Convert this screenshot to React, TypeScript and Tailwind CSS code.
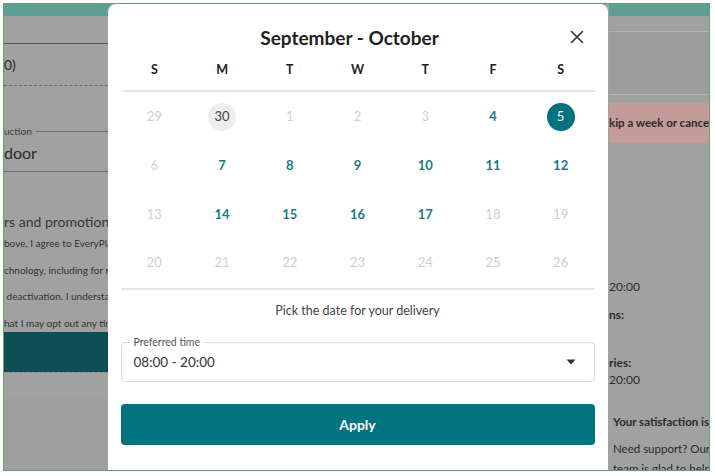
import React from "react";

const teal = "text-[#1d7884]";

type Day = { n: number; on?: boolean; today?: boolean; picked?: boolean };

const weeks: Day[][] = [
  [{ n: 29 }, { n: 30, today: true }, { n: 1 }, { n: 2 }, { n: 3 }, { n: 4, on: true }, { n: 5, picked: true }],
  [{ n: 6 }, { n: 7, on: true }, { n: 8, on: true }, { n: 9, on: true }, { n: 10, on: true }, { n: 11, on: true }, { n: 12, on: true }],
  [{ n: 13 }, { n: 14, on: true }, { n: 15, on: true }, { n: 16, on: true }, { n: 17, on: true }, { n: 18 }, { n: 19 }],
  [{ n: 20 }, { n: 21 }, { n: 22 }, { n: 23 }, { n: 24 }, { n: 25 }, { n: 26 }],
];

const DayCell = ({ d }: { d: Day }) => {
  if (d.picked) {
    return (
      <div className="flex h-7 w-7 items-center justify-center rounded-full bg-[#00717d] text-[13px] text-white">
        {d.n}
      </div>
    );
  }
  if (d.today) {
    return (
      <div className="flex h-7 w-7 items-center justify-center rounded-full bg-[#ededed] text-[13px] text-[#444]">
        {d.n}
      </div>
    );
  }
  return (
    <span className={`text-[13px] ${d.on ? `font-bold ${teal}` : "text-[#cfcfcf]"}`}>{d.n}</span>
  );
};

// page that sits dimmed behind the dialog
const Backdrop = () => (
  <div className="flex h-full w-full bg-[#a1a1a1] font-['Lato',sans-serif] text-[#2b2b2b]">
    <div className="w-[300px] shrink-0 whitespace-nowrap">
      <div className="h-3 bg-[#5e9e94]" />
      <div className="mt-[27px] border-t border-[#5c5c5c]" />
      <div className="flex h-[41px] items-center text-[14px]">0)</div>
      <div className="border-t border-dashed border-[#6a6a6a]" />
      <div className="mt-[38px] flex items-center gap-1">
        <span className="text-[10px] text-[#3d3d3d]">uction</span>
        <div className="flex-1 border-t border-[#5a7a78]" />
      </div>
      <div className="h-[28px] text-[16px] leading-[28px]">door</div>
      <div className="mt-[4px] border-t border-[#5a7a78]" />
      <div className="mt-[40px] text-[14px] leading-[20px] text-[#363636]">rs and promotions</div>
      <div className="mt-[-2px] flex flex-col text-[10px] leading-[26.5px] text-[#333]">
        <span>bove, I agree to EveryPlate's offers</span>
        <span>chnology, including for reminders</span>
        <span>&nbsp;deactivation. I understand</span>
        <span>hat I may opt out any time</span>
      </div>
      <div className="mt-[-4px] h-[40px] bg-[#0d4f55]" />
      <div className="border-t border-dashed border-[#8a8a8a]" />
      <div className="mt-[25px] h-[80px] bg-[#9f9f9f]" />
    </div>
    <div className="flex-1" />
    <div className="w-[100px] shrink-0 overflow-hidden whitespace-nowrap">
      <div className="h-3 bg-[#5e9e94]" />
      <div className="h-[15px]" />
      <div className="h-[64px] border-y border-[#b1b1b1] bg-[#9d9d9d]" />
      <div className="mt-[8px] flex h-[40px] items-center bg-[#c39c99] text-[11.5px] font-bold">kip a week or cancel</div>
      <div className="mt-[135px] text-[12px] leading-[18px]">20:00</div>
      <div className="mt-[10px] text-[12px] font-bold leading-[18px]">ns:</div>
      <div className="mt-[30px] text-[12px] font-bold leading-[18px]">ries:</div>
      <div className="text-[12px] leading-[16px]">20:00</div>
      <div className="mt-[25px] pl-[4px] text-[11.5px] font-bold leading-[18px]">Your satisfaction is</div>
      <div className="mt-[8px] pl-[4px] text-[11.5px] leading-[20px]">Need support? Our</div>
      <div className="pl-[4px] text-[11.5px] leading-[20px]">team is glad to help</div>
    </div>
  </div>
);

const App: React.FC = () => {
  return (
    <div className="relative h-[476px] w-[715px] overflow-hidden bg-white">
      <div className="absolute left-[3px] top-[3px] h-[468px] w-[707px] overflow-hidden border-[1.5px] border-[#5fa26c]">
        <Backdrop />

        {/* delivery date dialog */}
        <div className="absolute left-[103.5px] top-0 flex h-[480px] w-[500px] flex-col rounded-t-lg bg-white px-[13px] font-['Lato',sans-serif]">
          <div className="relative mt-[22px] flex h-6 items-center justify-center pr-[16px]">
            <h2 className="text-[19px] font-bold text-[#222]">September - October</h2>
            <button className="absolute right-[10px] top-[3px] text-[#333]">
              <svg width="16" height="16" viewBox="0 0 16 16" fill="none" stroke="currentColor" strokeWidth="1.6" strokeLinecap="round">
                <path d="M2.5 2.5l11 11M13.5 2.5l-11 11" />
              </svg>
            </button>
          </div>

          <div className="mt-[11px] grid grid-cols-7 text-center text-[12.5px] font-bold text-[#222]">
            {["S", "M", "T", "W", "T", "F", "S"].map((d, i) => (
              <span key={i}>{d}</span>
            ))}
          </div>

          <div className="mt-[10px] border-t-2 border-[#e6e6e6]" />

          <div className="flex flex-col pt-[1px]">
            {weeks.map((w, i) => (
              <div key={i} className="grid h-[48.7px] grid-cols-7 items-center justify-items-center">
                {w.map((d, j) => (
                  <DayCell key={j} d={d} />
                ))}
              </div>
            ))}
          </div>

          <div className="border-t-2 border-[#e6e6e6]" />

          <p className="mt-[12px] text-center text-[12.5px] text-[#444]">
            Pick the date for your delivery
          </p>

          <div className="relative mt-[22px] flex h-[40px] items-center rounded border border-[#dcdcdc] px-3">
            <span className="absolute left-[8px] top-[-8px] bg-white px-[4px] text-[10.5px] leading-[14px] text-[#555]">
              Preferred time
            </span>
            <span className="text-[13.5px] text-[#333]">08:00 - 20:00</span>
            <svg className="ml-auto mr-[6px]" width="10" height="6" viewBox="0 0 10 6">
              <path d="M0.5 0.5h9L5 5.5z" fill="#333" />
            </svg>
          </div>

          <button className="mt-[22px] h-[41px] rounded bg-[#00737f] text-[14px] font-bold text-white">
            Apply
          </button>
        </div>
      </div>
    </div>
  );
};

export default App;
